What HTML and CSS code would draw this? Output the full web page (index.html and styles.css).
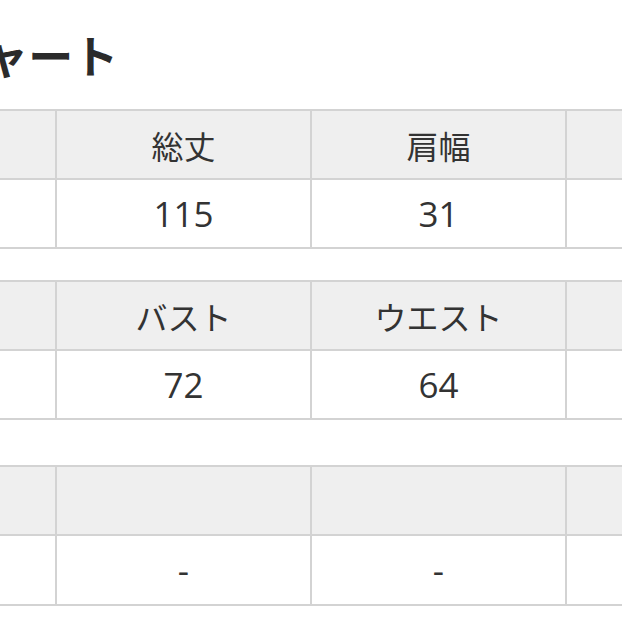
FILE: index.html
```html
<!DOCTYPE html>
<html lang="ja">
<head>
<meta charset="utf-8">
<link rel="stylesheet" href="styles.css">
</head>
<body>
<div class="page">
  <h1 class="title">サイズチャート</h1>
  <table class="chart first">
    <tr class="head"><th></th><th>総丈</th><th>肩幅</th><th></th></tr>
    <tr><td></td><td>115</td><td>31</td><td></td></tr>
  </table>
  <table class="chart second">
    <tr class="head"><th></th><th>バスト</th><th>ウエスト</th><th></th></tr>
    <tr><td></td><td>72</td><td>64</td><td></td></tr>
  </table>
  <table class="chart third">
    <tr class="head"><th></th><th></th><th></th><th></th></tr>
    <tr><td></td><td class="dash">-</td><td class="dash">-</td><td></td></tr>
  </table>
</div>
</body>
</html>
```
FILE: styles.css
```css
html, body {
  margin: 0;
  padding: 0;
  background: #ffffff;
  overflow: hidden;
}
.page {
  margin-left: -200px;
  width: 1100px;
  font-family: "Open Sans", "Noto Sans CJK JP", sans-serif;
  color: #333333;
}
.title {
  margin: 0;
  padding: 30px 0 0 5px;
  height: 79px;
  box-sizing: border-box;
  font-family: "Noto Sans CJK JP", sans-serif;
  font-weight: 700;
  font-size: 45px;
  line-height: 50px;
  color: #2b2b2b;
  white-space: nowrap;
}
.chart {
  border-collapse: collapse;
}
.chart th, .chart td {
  border: 2px solid #d3d3d3;
  width: 253px;
  min-width: 253px;
  height: 67px;
  padding: 0;
  text-align: center;
  vertical-align: middle;
  font-weight: 400;
  font-size: 35px;
  line-height: 40px;
}
.chart th {
  background: #efefef;
  font-family: "Noto Sans CJK JP", sans-serif;
  font-size: 32px;
}
.first { margin-top: 30px; }
.second { margin-top: 31px; }
.third { margin-top: 45px; }
.third td { height: 68px; }
.dash { font-size: 22px; font-weight: 700; }
```
